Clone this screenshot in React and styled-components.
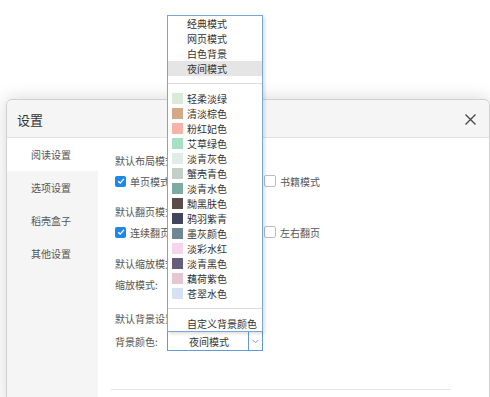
import React from 'react';
import styled, { createGlobalStyle } from 'styled-components';

const GlobalStyle = createGlobalStyle`
  html, body {
    margin: 0;
    padding: 0;
    background: #ffffff;
    overflow: hidden;
  }
  body {
    font-family: "Noto Sans CJK SC", "Noto Sans", sans-serif;
    color: #555;
  }
`;

const Stage = styled.div`
  padding: 99px 0 0 6px;
  height: 397px;
  box-sizing: border-box;
  overflow: hidden;
`;

const Dialog = styled.div`
  width: 484px;
  height: 308px;
  box-sizing: border-box;
  border: 1px solid #cfcfcf;
  border-radius: 6px;
  background: #fff;
  box-shadow: 0 0 18px rgba(0, 0, 0, 0.16);
  display: flex;
  flex-direction: column;
`;

const Header = styled.div`
  height: 38px;
  flex: none;
  box-sizing: border-box;
  display: flex;
  align-items: center;
  justify-content: space-between;
  padding: 2px 13px 0 10px;
  background: #f5f5f5;
  border-bottom: 1px solid #e2e2e2;
  border-radius: 6px 6px 0 0;
`;

const Title = styled.div`
  font-size: 13px;
  color: #333;
`;

const CloseButton = styled.svg`
  width: 11px;
  height: 11px;
  display: block;
`;

const Body = styled.div`
  flex: 1;
  display: flex;
`;

const Sidebar = styled.div`
  width: 91px;
  flex: none;
  background: #f5f5f5;
`;

const NavItem = styled.div`
  height: 33px;
  display: flex;
  align-items: center;
  padding-left: 24px;
  font-size: 10px;
  color: #555;
  background: ${p => (p.active ? '#ffffff' : 'transparent')};
`;

const Content = styled.div`
  flex: 1;
  padding: 16px 0 0 17px;
`;

const Section = styled.div`
  margin-top: ${p => p.spacing || 0}px;
`;

const Label = styled.div`
  font-size: 10px;
  line-height: 14px;
  color: #555;
`;

const Row = styled.div`
  margin-top: ${p => p.offset || 3}px;
  height: 20px;
  display: grid;
  grid-template-columns: 149px 150px;
  align-items: center;
`;

const FieldRow = styled.div`
  margin-top: ${p => p.offset || 3}px;
  height: 20px;
  display: flex;
  align-items: center;
`;

const Option = styled.label`
  display: flex;
  align-items: center;
  gap: 4px;
  font-size: 10px;
  color: #555;
`;

const Box = styled.span`
  width: ${p => (p.checked ? 11 : 10)}px;
  height: ${p => (p.checked ? 11 : 10)}px;
  border-radius: 2px;
  display: flex;
  align-items: center;
  justify-content: center;
  background: ${p => (p.checked ? '#1f87e6' : '#fff')};
  border: ${p => (p.checked ? 'none' : '1px solid #bdbdbd')};
`;

const FieldLabel = styled.span`
  width: 52px;
  font-size: 10px;
  color: #555;
`;

const Select = styled.div`
  position: relative;
  width: 96px;
  height: 20px;
  box-sizing: border-box;
  border: 1px solid #5f9bd6;
  background: #fff;
  display: flex;
  font-size: 10px;
  color: #333;
`;

const SelectValue = styled.div`
  flex: 1;
  display: flex;
  align-items: center;
  padding-left: 21px;
`;

const SelectArrow = styled.div`
  width: 13px;
  border-left: 1px solid #5f9bd6;
  display: flex;
  align-items: center;
  justify-content: center;
`;

const Menu = styled.div`
  position: absolute;
  left: -1px;
  right: -1px;
  bottom: 100%;
  z-index: 10;
  background: #fff;
  border: 1px solid #7aa7d9;
  box-shadow: 2px 2px 3px rgba(0, 0, 0, 0.12);
`;

const MenuItem = styled.div`
  height: 15px;
  display: flex;
  align-items: center;
  padding-left: ${p => (p.swatch ? 4 : 19)}px;
  font-size: 10px;
  color: #333;
  background: ${p => (p.selected ? '#e5e5e5' : 'transparent')};
`;

const Swatch = styled.span`
  width: 11px;
  height: 11px;
  margin-right: 4px;
  background: ${p => p.color};
`;

const MenuSeparator = styled.div`
  height: 15px;
  position: relative;

  &::after {
    content: '';
    position: absolute;
    left: 0;
    right: 0;
    top: 7px;
    height: 1px;
    background: #dcdcdc;
  }
`;

const Divider = styled.div`
  margin: 38px 0 0 -4px;
  width: 340px;
  height: 1px;
  background: #e6e6e6;
`;

const modes = ['经典模式', '网页模式', '白色背景', '夜间模式'];

const colors = [
  ['轻柔淡绿', '#dbe9d8'],
  ['清淡棕色', '#d5a987'],
  ['粉红妃色', '#f8b3a9'],
  ['艾草绿色', '#a8e0c3'],
  ['淡青灰色', '#dfece7'],
  ['蟹壳青色', '#c1cfc7'],
  ['淡青水色', '#7daba2'],
  ['黝黑肤色', '#5c4b4b'],
  ['鸦羽紫青', '#43465a'],
  ['墨灰颜色', '#6f8792'],
  ['淡彩水红', '#f6d4e9'],
  ['淡青黑色', '#655d79'],
  ['藕荷紫色', '#e6c6d3'],
  ['苍翠水色', '#d6e1f3'],
];

function Check({ checked }) {
  return (
    <Box checked={checked}>
      {checked && (
        <svg width="8" height="8" viewBox="0 0 8 8">
          <path d="M1.2 4.2 L3.2 6.1 L6.9 1.9" fill="none" stroke="#fff" strokeWidth="1.4" />
        </svg>
      )}
    </Box>
  );
}

export default function App() {
  return (
    <>
      <GlobalStyle />
      <Stage>
        <Dialog>
          <Header>
            <Title>设置</Title>
            <CloseButton viewBox="0 0 11 11">
              <path d="M0.5 0.5 L10.5 10.5 M10.5 0.5 L0.5 10.5" stroke="#444" strokeWidth="1.3" />
            </CloseButton>
          </Header>
          <Body>
            <Sidebar>
              <NavItem active>阅读设置</NavItem>
              <NavItem>选项设置</NavItem>
              <NavItem>稻壳盒子</NavItem>
              <NavItem>其他设置</NavItem>
            </Sidebar>
            <Content>
              <Section>
                <Label>默认布局模式</Label>
                <Row>
                  <Option><Check checked />单页模式</Option>
                  <Option><Check />书籍模式</Option>
                </Row>
              </Section>
              <Section spacing={14}>
                <Label>默认翻页模式</Label>
                <Row>
                  <Option><Check checked />连续翻页</Option>
                  <Option><Check />左右翻页</Option>
                </Row>
              </Section>
              <Section spacing={15}>
                <Label>默认缩放模式</Label>
                <FieldRow>
                  <FieldLabel>缩放模式:</FieldLabel>
                  <Select>
                    <SelectValue />
                    <SelectArrow />
                  </Select>
                </FieldRow>
              </Section>
              <Section spacing={18}>
                <Label>默认背景设置</Label>
                <FieldRow offset={5}>
                  <FieldLabel>背景颜色:</FieldLabel>
                  <Select>
                    <Menu>
                      {modes.map(m => (
                        <MenuItem key={m} selected={m === '夜间模式'}>{m}</MenuItem>
                      ))}
                      <MenuSeparator />
                      {colors.map(([name, color]) => (
                        <MenuItem key={name} swatch>
                          <Swatch color={color} />
                          {name}
                        </MenuItem>
                      ))}
                      <MenuSeparator />
                      <MenuItem>自定义背景颜色</MenuItem>
                    </Menu>
                    <SelectValue>夜间模式</SelectValue>
                    <SelectArrow>
                      <svg width="7" height="5" viewBox="0 0 7 5">
                        <path d="M0.8 1 L3.5 3.8 L6.2 1" fill="none" stroke="#7a9cc2" strokeWidth="1" />
                      </svg>
                    </SelectArrow>
                  </Select>
                </FieldRow>
              </Section>
              <Divider />
            </Content>
          </Body>
        </Dialog>
      </Stage>
    </>
  );
}
